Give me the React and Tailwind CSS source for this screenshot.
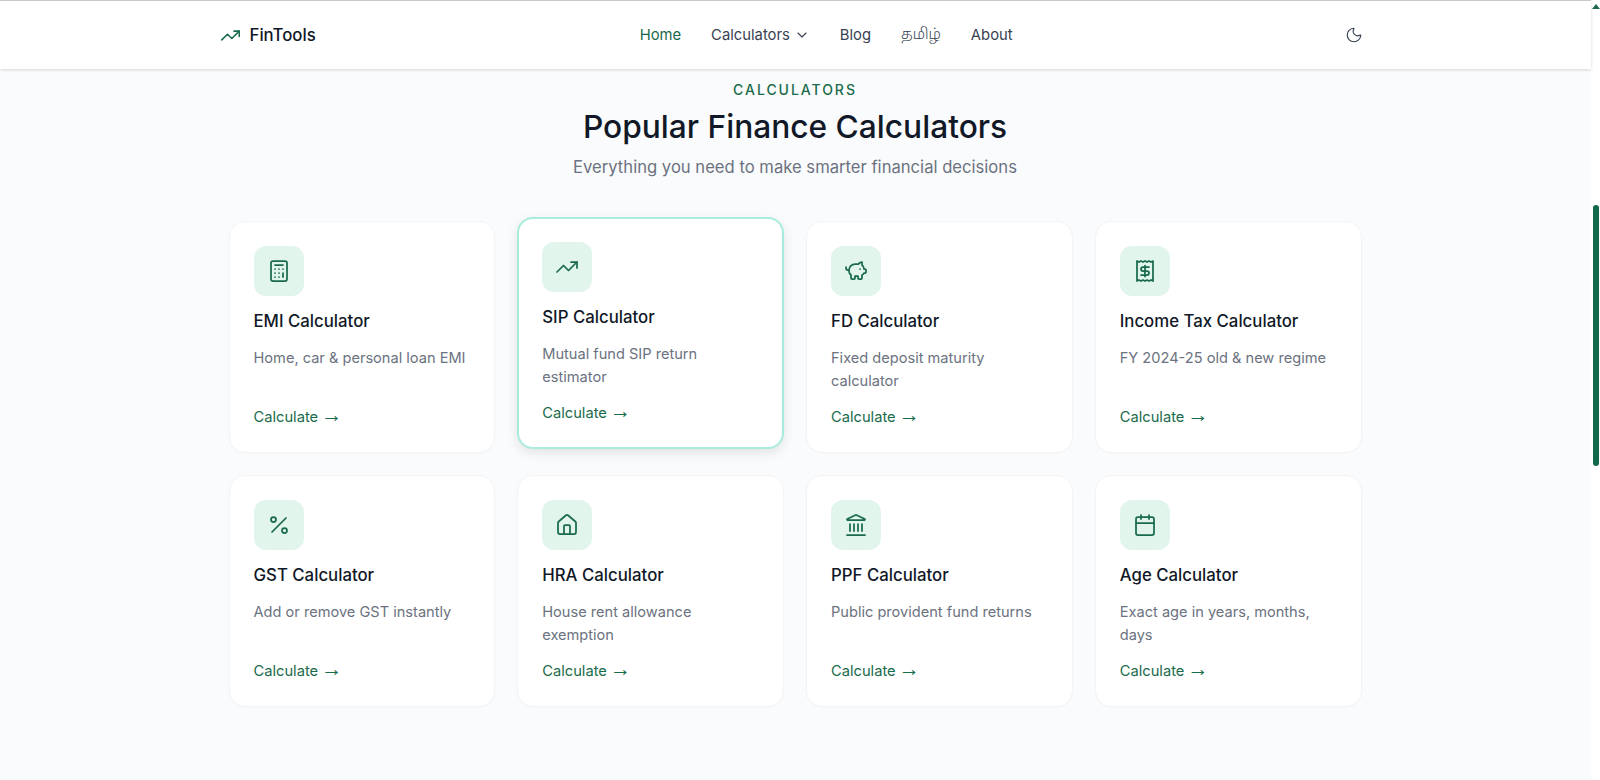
import React from "react";
import {
  Calculator,
  Calendar,
  ChevronDown,
  House,
  Landmark,
  Moon,
  Percent,
  PiggyBank,
  Receipt,
  TrendingUp,
} from "lucide-react";

const calculators = [
  { title: "EMI Calculator", text: "Home, car & personal loan EMI", icon: Calculator },
  { title: "SIP Calculator", text: "Mutual fund SIP return estimator", icon: TrendingUp, active: true },
  { title: "FD Calculator", text: "Fixed deposit maturity calculator", icon: PiggyBank },
  { title: "Income Tax Calculator", text: "FY 2024-25 old & new regime", icon: Receipt },
  { title: "GST Calculator", text: "Add or remove GST instantly", icon: Percent },
  { title: "HRA Calculator", text: "House rent allowance exemption", icon: House },
  { title: "PPF Calculator", text: "Public provident fund returns", icon: Landmark },
  { title: "Age Calculator", text: "Exact age in years, months, days", icon: Calendar },
];

function Card({ title, text, icon: Icon, active }) {
  return (
    <div
      className={`flex h-[232px] flex-col rounded-2xl bg-white ${
        active
          ? "-translate-y-1 border-2 border-[#a8ecdd] p-[23px] pb-[24px] shadow-[0_4px_12px_rgba(0,0,0,0.1)]"
          : "border border-[#f3f4f6] p-6 pb-[25px] shadow-[0_1px_2px_rgba(0,0,0,0.02)]"
      }`}
    >
      <div className="flex h-[50px] w-[50px] items-center justify-center rounded-xl bg-[#e2f5ed] text-[#1a6b4c]">
        <Icon size={24} strokeWidth={1.75} />
      </div>
      <h3 className="mt-[13px] text-[16.8px] leading-[24px] font-medium text-[#111827]">{title}</h3>
      <p className="mt-[14px] text-[14.6px] leading-[23px] text-[#6b7280]">{text}</p>
      <div className="mt-auto text-[14.7px] leading-[20px] text-[#1a6b4c]">
        Calculate <span className="-ml-px font-['Liberation_Sans',sans-serif] text-[21px] leading-[0]">→</span>
      </div>
    </div>
  );
}

export default function App() {
  return (
    <div className="flex h-[780px] overflow-hidden bg-white font-['Inter',sans-serif]">
      <div className="flex min-w-0 flex-1 flex-col bg-[#fafbfc]">
        <header className="relative z-10 border-t border-[#c9c9c9] bg-white shadow-[0_1px_3px_rgba(0,0,0,0.15)]">
          <nav className="mx-auto flex h-[68px] max-w-[1200px] items-center justify-between px-6">
            <div className="flex items-center gap-[9px] text-[16.8px] font-medium text-[#111827]">
              <TrendingUp size={21} strokeWidth={1.75} className="text-[#1a6b4c]" />
              <span className="mt-px">FinTools</span>
            </div>
            <div className="flex items-center gap-[30px] text-[14.8px] text-[#374151]">
              <span className="text-[#1a6b4c]">Home</span>
              <span className="flex items-center gap-1">
                Calculators
                <ChevronDown size={16} strokeWidth={1.75} />
              </span>
              <span>Blog</span>
              <span className="font-['Noto_Sans_Tamil','Noto_Sans',sans-serif] font-light">தமிழ்</span>
              <span>About</span>
            </div>
            <button className="mr-px p-2 text-[#374151]">
              <Moon size={18} strokeWidth={1.5} />
            </button>
          </nav>
        </header>

        <main className="mx-auto w-full max-w-[1180px] pr-6 pl-[23px]">
          <div className="mt-[11px] text-center">
            <div className="text-[14px] leading-[20px] font-medium tracking-[0.14em] text-[#1a6b4c]">CALCULATORS</div>
            <h2 className="mt-[5px] text-[31.7px] leading-[44px] font-medium text-[#111827]">
              Popular Finance Calculators
            </h2>
            <p className="mt-[6px] text-[16.64px] leading-[24px] text-[#6b7280]">
              Everything you need to make smarter financial decisions
            </p>
          </div>
          <div className="mt-[42px] grid grid-cols-4 gap-[22px]">
            {calculators.map((item) => (
              <Card key={item.title} {...item} />
            ))}
          </div>
        </main>
      </div>

      <div className="flex w-[9px] flex-col items-center bg-white">
        <svg width="8" height="5" viewBox="0 0 8 5" className="mt-[4px] text-[#1a6b4c]">
          <path d="M4 0 8 5H0Z" fill="currentColor" />
        </svg>
        <div className="mt-[196px] h-[261px] w-[6px] rounded-full bg-[#10694a]" />
      </div>
    </div>
  );
}
